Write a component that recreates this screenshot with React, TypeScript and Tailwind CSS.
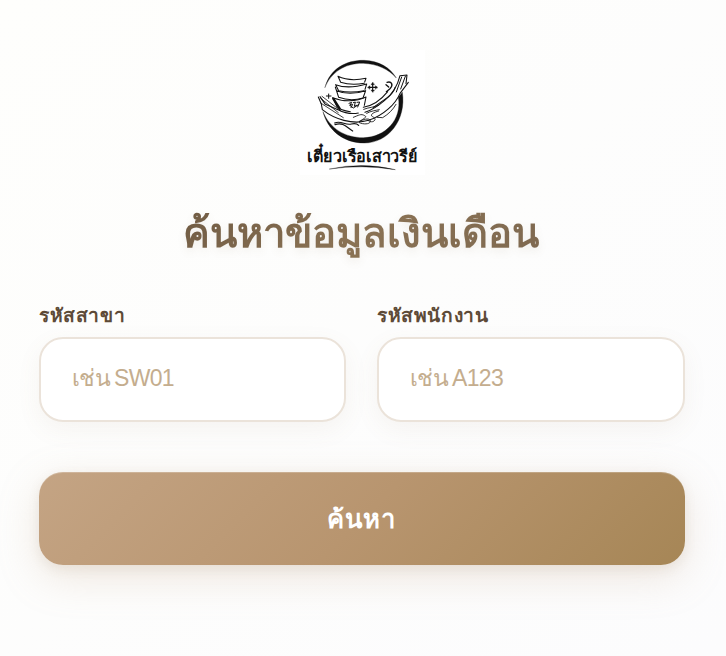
function Logo() {
  return (
    <svg viewBox="15 15 375 375" className="h-[125px] w-[125px] bg-white" fill="none" stroke="#111" strokeLinecap="round" strokeLinejoin="round" role="img">
      <path d="M90 127C105 70 155 45 207 46C252 47 285 68 304 99C280 72 247 57 205 55C150 54 108 82 90 127Z" fill="#111" strokeWidth="1" />
      <path d="M322 142C335 225 280 294 208 294C142 294 97 252 84 200C105 251 150 278 205 278C270 277 322 225 310 157Z" fill="#111" strokeWidth="1" />
      <g strokeWidth="3.2">
        <path d="M129 94C150 104 184 106 213 100L209 111M129 94L137 112C159 119 184 119 208 115" />
        <path d="M122 119C148 129 184 126 215 117L210 133M122 119L131 137C156 143 183 142 207 137" />
        <path d="M121 126L131 157C155 166 182 166 204 159L212 137M125 137C151 148 184 146 212 137" />
        <path d="M113 158C144 171 184 170 213 156L208 181M113 158L126 185C134 194 148 198 166 200" />
        <path d="M115 161L134 191" strokeWidth="7" />
        <path d="M162 175L170 172L165 181L173 178L168 188M175 173L181 171L178 184L185 181M186 172L194 171L188 186M164 181L175 189L192 178" strokeWidth="3" />
        <path d="M70 156L79 177L82 194C117 222 173 241 221 226C266 211 302 177 315 145L340 112" />
        <path d="M75 155L91 178L129 194C151 205 175 207 190 204M210 202C231 195 248 184 269 166C292 148 308 121 315 92L336 90L333 116" />
        <path d="M77 160L130 203M77 174L145 218M81 154L139 199" strokeWidth="2.4" />
        <path d="M320 96L304 141M331 94L317 132" strokeWidth="3" />
        <path d="M276 112C290 108 296 120 285 131L274 140M273 119L281 126" strokeWidth="4" />
        <path d="M205 187C242 181 262 160 278 140M235 187L278 157C291 147 297 139 300 128" />
        <path d="M175 217C191 211 198 205 209 212C218 216 207 220 192 230C205 224 222 217 226 227C228 237 208 240 193 233" strokeWidth="2.6" />
        <path d="M206 193C220 187 238 187 251 181M215 205C227 198 243 196 253 194M251 198C236 202 227 207 230 213C237 218 245 221 237 228C231 233 221 229 218 225M246 217L263 218C281 207 294 194 303 178" strokeWidth="2.6" />
        <path d="M119 234C138 225 151 242 169 237C178 235 184 234 191 241M120 239C147 230 157 250 173 258" strokeWidth="3.6" />
      </g>
      <g fill="#111" strokeWidth="1">
        <path d="M233 117V137M222 127H244" strokeWidth="3.5" />
        <path d="M233 112L228 119H238ZM233 142L228 135H238ZM218 127L225 122V132ZM248 127L241 122V132Z" />
        <path d="M101 147V160M94 153H108" strokeWidth="3" />
      </g>
      <text x="36" y="350" textLength="331" lengthAdjust="spacingAndGlyphs" fontSize="50" fontWeight="700" fill="#111" stroke="none" className="font-['Noto_Sans',sans-serif]">เตี๋ยวเรือเสาวรีย์</text>
      <path d="M104 372Q202 350 301 374Q202 358 104 372Z" fill="#111" strokeWidth="1" />
    </svg>
  );
}

function Field({ id, label, placeholder }: { id: string; label: string; placeholder: string }) {
  return (
    <div className="min-w-0">
      <label htmlFor={id} className="block h-[37px] pt-[3px] text-[19.2px] leading-6 font-bold tracking-[0.6px] whitespace-nowrap text-[#5d4a37]">{label}</label>
      <input id={id} placeholder={placeholder} className="block h-[85px] w-full rounded-[24px] border-2 border-[#ebe3da] bg-white px-[31px] pb-[2px] font-['Liberation_Sans',sans-serif] text-[23px] tracking-[-0.7px] [word-spacing:-1.5px] text-[#5d4a37] shadow-[0_8px_24px_rgba(139,115,85,0.07)] outline-none placeholder:text-[#c4ad8e]" />
    </div>
  );
}

export default function App() {
  return (
    <main className="flex h-[656px] w-full flex-col overflow-hidden bg-linear-to-br from-[#fefefc] to-[#fcfcfd] pt-[50px] pr-[41px] pl-[39px] font-['Noto_Sans','Liberation_Sans',sans-serif]">
      <div className="flex justify-center"><Logo /></div>
      <h1 className="mt-[25px] bg-linear-135 from-[#5d4a37] via-[#8b7355] to-[#75614d] bg-clip-text pr-[2px] text-center text-[40px] leading-[64px] font-bold whitespace-nowrap text-transparent [text-shadow:0_4px_8px_rgba(139,115,85,0.10)]">ค้นหาข้อมูลเงินเดือน</h1>
      <form className="mt-[36px] flex flex-col" onSubmit={(event) => event.preventDefault()}>
        <div className="grid grid-cols-[307px_308px] gap-[31px]">
          <Field id="branch" label="รหัสสาขา" placeholder="เช่น SW01" />
          <Field id="employee" label="รหัสพนักงาน" placeholder="เช่น A123" />
        </div>
        <button className="mt-[50px] h-[93px] rounded-[24px] bg-linear-135 from-[#c4a484] via-[#b8956f] to-[#a68656] pt-[2px] pr-[2px] text-[25.6px] font-bold tracking-[1px] text-white shadow-[0_12px_40px_rgba(196,164,132,0.25),0_4px_12px_rgba(139,115,85,0.12),inset_0_1px_0_rgba(255,255,255,0.2)]">ค้นหา</button>
      </form>
    </main>
  );
}
